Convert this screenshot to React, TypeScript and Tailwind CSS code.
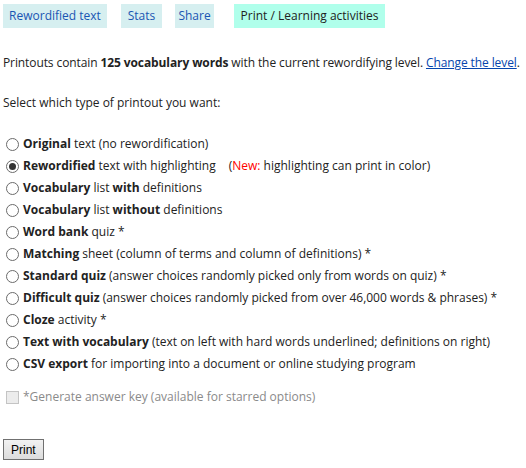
import React, { useState } from 'react';

interface PrintOption {
    id: string;
    bold: string;
    rest: React.ReactNode;
}

const OPTIONS: PrintOption[] = [
    { id: 'original', bold: 'Original', rest: ' text (no rewordification)' },
    {
        id: 'reworded', bold: 'Rewordified', rest: (
            <>
                {' text with highlighting'}
                <span className="ml-[13px]">(<span className="text-[#ff0000]">New:</span> highlighting can print in color)</span>
            </>
        )
    },
    { id: 'vocabWith', bold: 'Vocabulary', rest: <> list <b>with</b> definitions</> },
    { id: 'vocabWithout', bold: 'Vocabulary', rest: <> list <b>without</b> definitions</> },
    { id: 'wordbank', bold: 'Word bank', rest: ' quiz *' },
    { id: 'matching', bold: 'Matching', rest: ' sheet (column of terms and column of definitions) *' },
    { id: 'standard', bold: 'Standard quiz', rest: ' (answer choices randomly picked only from words on quiz) *' },
    { id: 'difficult', bold: 'Difficult quiz', rest: ' (answer choices randomly picked from over 46,000 words & phrases) *' },
    { id: 'cloze', bold: 'Cloze', rest: ' activity *' },
    { id: 'textvocab', bold: 'Text with vocabulary', rest: ' (text on left with hard words underlined; definitions on right)' },
    { id: 'csv', bold: 'CSV export', rest: ' for importing into a document or online studying program' },
];

const Radio: React.FC<{ checked: boolean }> = ({ checked }) => (
    <span className="w-[13px] h-[13px] rounded-full border border-[#6b6b6b] bg-white flex items-center justify-center shrink-0">
        {checked && <span className="w-[7px] h-[7px] rounded-full bg-[#333]"></span>}
    </span>
);

export default function App() {
    const [selected, setSelected] = useState('reworded');

    return (
        <div className="w-[526px] h-[468px] bg-white text-[12px] text-[#222] pl-[3px] pt-[4px]" style={{ fontFamily: '"Open Sans", "Noto Sans", sans-serif' }}>
            {/* Tabs */}
            <div className="flex items-start h-[24px]">
                <div className="h-[24px] w-[104px] bg-[#d6eff0] text-[#1a55b3] flex items-center justify-center">Rewordified text</div>
                <div className="h-[24px] w-[41px] ml-[14px] bg-[#d6eff0] text-[#1a55b3] flex items-center justify-center">Stats</div>
                <div className="h-[24px] w-[39px] ml-[13px] bg-[#d6eff0] text-[#1a55b3] flex items-center justify-center">Share</div>
                <div className="h-[24px] w-[151px] ml-[20px] bg-[#b0ffeb] text-[#222] flex items-center justify-center">Print / Learning activities</div>
            </div>

            <p className="mt-[26px] leading-[18px] whitespace-nowrap tracking-[-0.1px]">
                Printouts contain <b>125 vocabulary words</b> with the current rewordifying level.{' '}
                <a href="#" className="text-[#0645ad] underline">Change the level</a>.
            </p>

            <p className="mt-[22px] leading-[18px]">Select which type of printout you want:</p>

            <div className="mt-[21px] flex flex-col">
                {OPTIONS.map(opt => (
                    <label key={opt.id} onClick={() => setSelected(opt.id)} className="h-[22px] flex items-center gap-[4px] pl-[3px] whitespace-nowrap cursor-pointer">
                        <Radio checked={selected === opt.id} />
                        <span><b>{opt.bold}</b>{opt.rest}</span>
                    </label>
                ))}
            </div>

            <div className="mt-[11px] h-[22px] flex items-center gap-[4px] pl-[3px] text-[#8a8a8a]">
                <span className="w-[13px] h-[13px] border border-[#c4c4c4] bg-[#ececec] shrink-0"></span>
                <span>*Generate answer key (available for starred options)</span>
            </div>

            <button className="mt-[31px] h-[21px] px-[7px] border border-[#707070] bg-gradient-to-b from-[#f2f2f2] to-[#dcdcdc] text-[12px] text-black leading-none" style={{ fontFamily: '"Liberation Sans", Arial, sans-serif' }}>
                Print
            </button>
        </div>
    );
}
